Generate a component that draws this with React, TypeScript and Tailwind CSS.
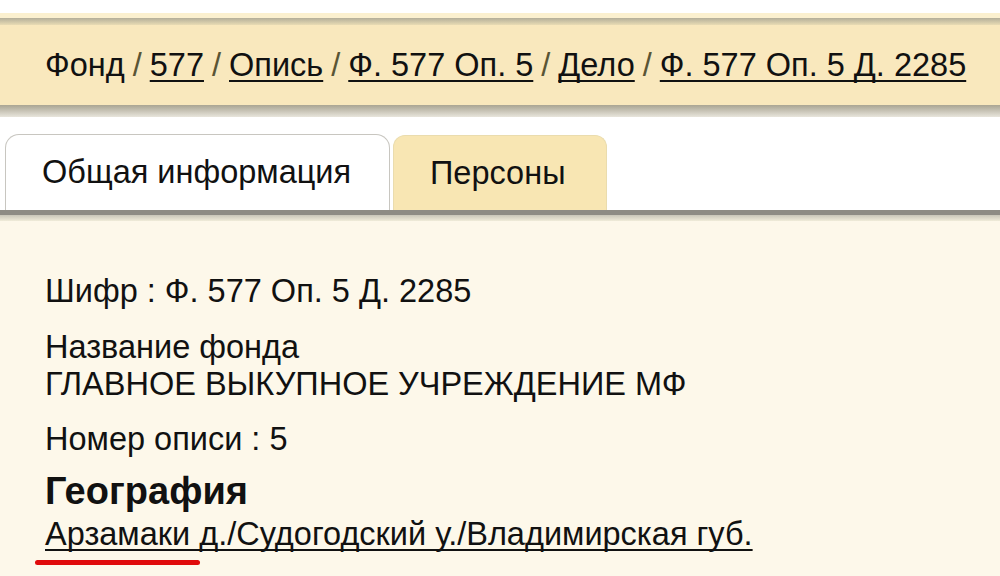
export default function App() {
  const crumbs = ["577", "Опись", "Ф. 577 Оп. 5", "Дело", "Ф. 577 Оп. 5 Д. 2285"]

  return (
    <div className="w-[1000px] h-[576px] overflow-hidden bg-white text-[#111] font-['Liberation_Sans',Arial,sans-serif]">
      {/* Breadcrumbs */}
      <div className="pt-[13px]">
        <div className="h-[5px] bg-[#fbf0cf]" />
        <div className="h-[7px] bg-gradient-to-b from-[#b4ae99] to-[#e9dcb4]" />
        <div className="h-[80px] bg-[#f9e8bd] flex items-center pl-[45px] text-[32.5px] whitespace-nowrap">
          <span>Фонд</span>
          {crumbs.map((c) => (
            <span key={c} className="flex">
              <span className="text-[#5a5535] mx-[8px]">/</span>
              <a href="#" className="underline underline-offset-[4px] decoration-[2px] [text-decoration-skip-ink:none] text-[#111]">
                {c}
              </a>
            </span>
          ))}
        </div>
        <div className="h-[12px] bg-gradient-to-b from-[#aaa593] to-[#e8e5dc]" />
      </div>

      {/* Tabs */}
      <div className="mt-[17px] flex items-end pl-[5px] h-[76px]">
        <div className="h-[76px] w-[385px] bg-white border border-b-0 border-[#c8c6c0] rounded-t-[14px] flex items-center pl-[36px] text-[32.5px]">
          Общая информация
        </div>
        <div className="ml-[3px] h-[75px] w-[214px] bg-[#f8e6b3] border border-b-0 border-[#eadcae] rounded-t-[12px] flex items-center pl-[36px] text-[32.5px]">
          Персоны
        </div>
      </div>
      <div className="h-[5px] bg-[#8e8c84]" />
      <div className="h-[6px] bg-gradient-to-b from-[#c9c6b8] to-[#f0ecd9]" />

      {/* Content */}
      <div className="bg-[#fdf8ea] h-full pl-[45px] pt-[52px] text-[32.5px] leading-[37px]">
        <div>Шифр : Ф. 577 Оп. 5 Д. 2285</div>
        <div className="mt-[19px]">Название фонда</div>
        <div>ГЛАВНОЕ ВЫКУПНОЕ УЧРЕЖДЕНИЕ МФ</div>
        <div className="mt-[18px]">Номер описи : 5</div>
        <div className="mt-[15px] font-bold text-[38px]">География</div>
        <a href="#" className="inline-block mt-[6px] underline underline-offset-[4px] decoration-[2px] [text-decoration-skip-ink:none] text-[#111]">
          Арзамаки д./Судогодский у./Владимирская губ.
        </a>
        <div className="mt-[7px] -ml-[10px] w-[165px] h-[5px] rounded-full bg-[#e00b0b]" />
      </div>
    </div>
  )
}
